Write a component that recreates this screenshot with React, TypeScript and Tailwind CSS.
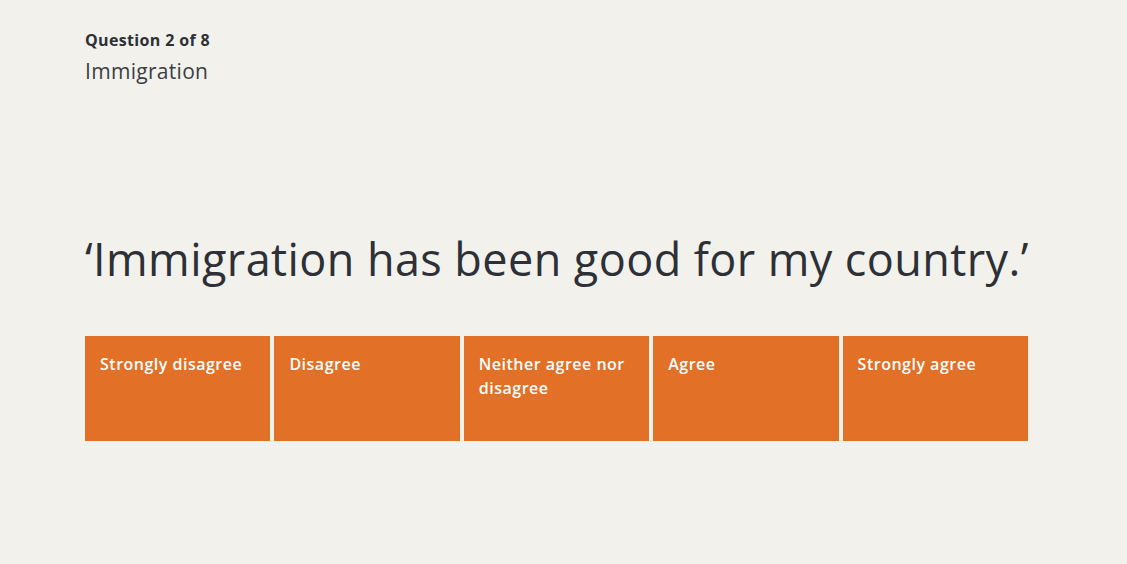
const options = ['Strongly disagree', 'Disagree', 'Neither agree nor disagree', 'Agree', 'Strongly agree'];

export default function App() {
    return (
        <div className="min-h-[564px] w-full bg-[#f2f1ec] text-[#2d3036]" style={{ fontFamily: '"Open Sans", "Liberation Sans", sans-serif' }}>
            <div className="pl-[85px] pt-[29px]">
                {/* Header */}
                <p className="text-[16px] font-bold leading-[22px] tracking-[0.35px] text-[#2d3036]">Question 2 of 8</p>
                <p className="mt-[6px] text-[21px] leading-[28px] tracking-[0.3px] text-[#3b3e44]">Immigration</p>

                {/* Statement */}
                <h1 className="mt-[146px] text-[45px] leading-[56px] tracking-[0.42px] text-[#2d3036] whitespace-nowrap">
                    ‘Immigration has been good for my country.’
                </h1>

                {/* Options */}
                <div className="mt-[49px] grid w-[943px] grid-cols-5 gap-[4px]">
                    {options.map((opt) => (
                        <button
                            key={opt}
                            className="h-[105px] bg-[#e37027] px-[15px] pt-[16px] text-left text-[16px] font-semibold leading-[24px] tracking-[0.5px] text-white flex items-start"
                        >
                            {opt}
                        </button>
                    ))}
                </div>
            </div>
        </div>
    );
}
